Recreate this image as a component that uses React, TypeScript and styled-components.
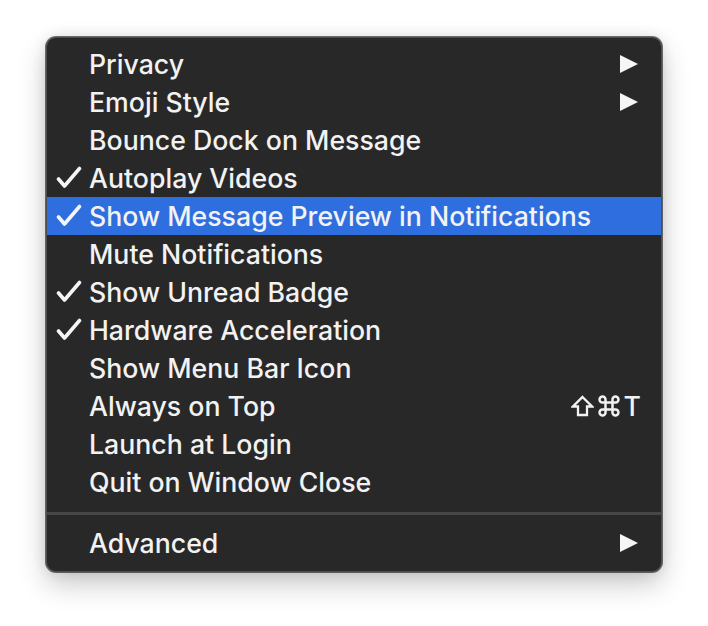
import React from "react";
import styled, { createGlobalStyle } from "styled-components";

const Global = createGlobalStyle`
  html, body { margin: 0; padding: 0; background: #ffffff; }
  body { font-family: Inter, "Noto Sans", "Liberation Sans", sans-serif; }
`;

const Page = styled.div`
  width: 708px;
  height: 626px;
  padding: 37px 0 0 46px;
  box-sizing: border-box;
`;

const Menu = styled.div`
  width: 616px;
  box-sizing: border-box;
  background: #282828;
  border-radius: 10px;
  border: 1px solid #4d4d4d;
  box-shadow: 0 0 0 1px rgba(0, 0, 0, 0.55), 0 12px 28px rgba(0, 0, 0, 0.22),
    0 0 14px rgba(0, 0, 0, 0.1);
  padding: 7px 0 9px;
  display: flex;
  flex-direction: column;
`;

const Row = styled.div<{ $active?: boolean }>`
  height: 38px;
  display: grid;
  grid-template-columns: 42px 1fr auto;
  align-items: center;
  padding-right: 23px;
  background: ${(p) => (p.$active ? "#2f6edf" : "transparent")};
  color: #f2f2f2;
  font-size: 26.7px;
  font-weight: 500;
`;

const CheckCell = styled.span`
  display: flex;
  align-items: center;
  padding-left: 9px;
  height: 100%;
`;

const Label = styled.span`
  white-space: nowrap;
  line-height: 1;
`;

const Arrow = styled.span`
  width: 0;
  height: 0;
  border-top: 9.5px solid transparent;
  border-bottom: 9.5px solid transparent;
  border-left: 18px solid #f5f5f5;
`;

const Shortcut = styled.span`
  display: flex;
  align-items: center;
  gap: 4px;
  margin-right: -3px;
  line-height: 1;
`;

const Separator = styled.div`
  height: 3px;
  background: #474747;
  margin: 11px 0 9px;
`;

type Item = {
  label: string;
  checked?: boolean;
  submenu?: boolean;
  active?: boolean;
  shortcut?: boolean;
};

const items: Item[] = [
  { label: "Privacy", submenu: true },
  { label: "Emoji Style", submenu: true },
  { label: "Bounce Dock on Message" },
  { label: "Autoplay Videos", checked: true },
  { label: "Show Message Preview in Notifications", checked: true, active: true },
  { label: "Mute Notifications" },
  { label: "Show Unread Badge", checked: true },
  { label: "Hardware Acceleration", checked: true },
  { label: "Show Menu Bar Icon" },
  { label: "Always on Top", shortcut: true },
  { label: "Launch at Login" },
  { label: "Quit on Window Close" },
];

const CheckIcon = () => (
  <svg width="26" height="24" viewBox="0 0 26 24">
    <path
      d="M2.5 13 L8.5 20 L23.5 2.5"
      fill="none"
      stroke="#f5f5f5"
      strokeWidth="3.6"
      strokeLinecap="round"
      strokeLinejoin="round"
    />
  </svg>
);

const ShiftIcon = () => (
  <svg width="23" height="22" viewBox="0 0 23 22">
    <path
      d="M11.5 2 L21 11.5 H16 V20 H7 V11.5 H2 Z"
      fill="none"
      stroke="#f2f2f2"
      strokeWidth="2.3"
      strokeLinejoin="miter"
    />
  </svg>
);

const CmdIcon = () => (
  <svg width="22" height="22" viewBox="0 0 22 22">
    <path
      d="M7.5 7.5 H14.5 V14.5 H7.5 Z M7.5 7.5 V5 A3 3 0 1 0 4.5 7.5 H7.5 M14.5 7.5 V5 A3 3 0 1 1 17.5 7.5 H14.5 M14.5 14.5 V17 A3 3 0 1 0 17.5 14.5 H14.5 M7.5 14.5 V17 A3 3 0 1 1 4.5 14.5 H7.5"
      fill="none"
      stroke="#f2f2f2"
      strokeWidth="2.5"
    />
  </svg>
);

const MenuRow = ({ item }: { item: Item }) => (
  <Row $active={item.active}>
    <CheckCell>{item.checked ? <CheckIcon /> : null}</CheckCell>
    <Label>{item.label}</Label>
    {item.submenu ? (
      <Arrow />
    ) : item.shortcut ? (
      <Shortcut>
        <ShiftIcon />
        <CmdIcon />
        <span>T</span>
      </Shortcut>
    ) : (
      <span />
    )}
  </Row>
);

export default function App() {
  return (
    <>
      <Global />
      <Page>
        <Menu>
          {items.map((it) => (
            <MenuRow key={it.label} item={it} />
          ))}
          <Separator />
          <MenuRow item={{ label: "Advanced", submenu: true }} />
        </Menu>
      </Page>
    </>
  );
}
